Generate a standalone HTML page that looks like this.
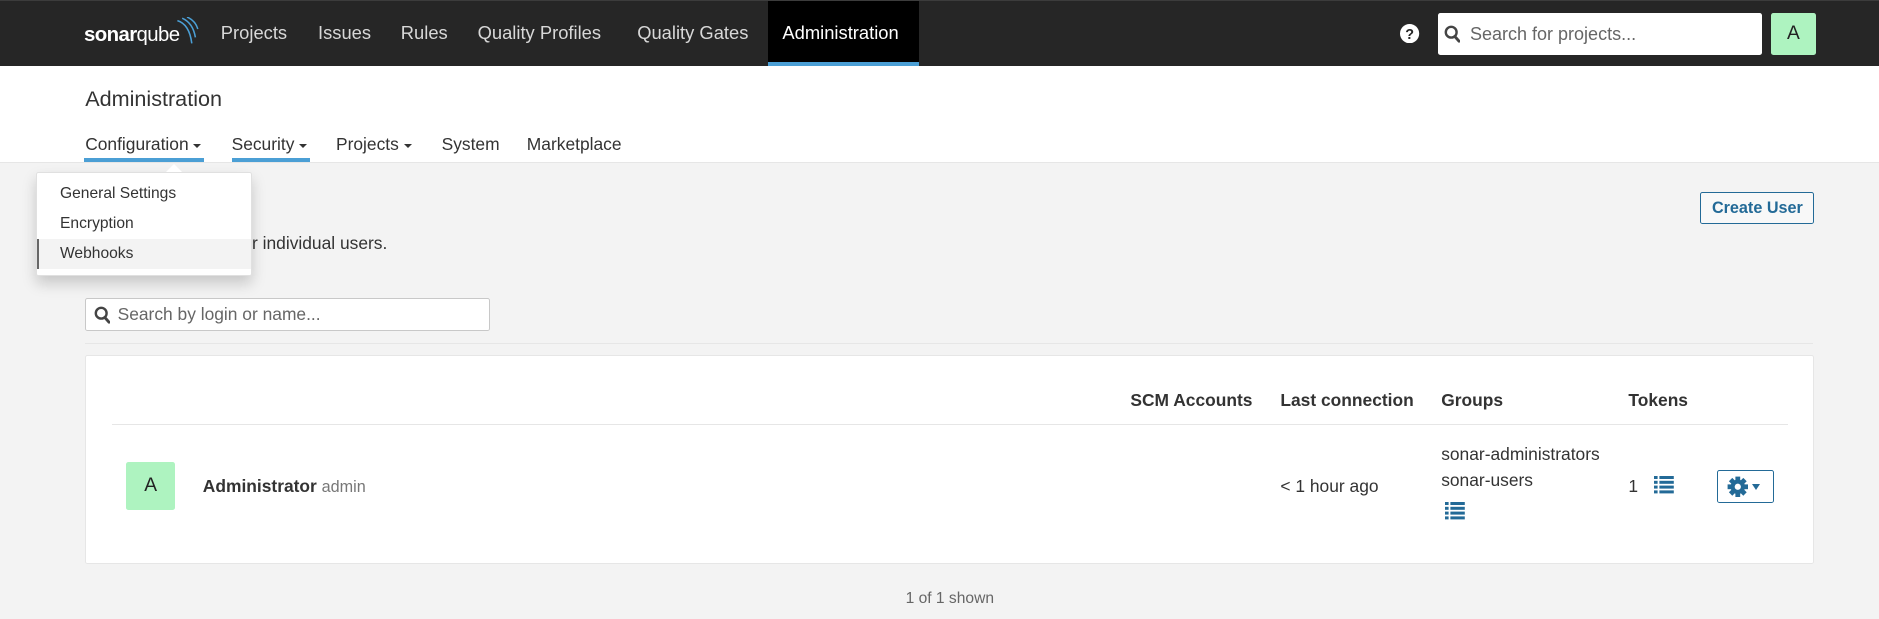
<!DOCTYPE html>
<html><head><meta charset="utf-8">
<style>
html{zoom:1.2}
*{box-sizing:border-box;margin:0;padding:0}
body{width:1566px;height:516px;overflow:hidden;background:#f3f3f3;font-family:"Liberation Sans",Arial,sans-serif;color:#333;position:relative;font-size:13px}
.abs{position:absolute}
.nav{left:0;top:0;width:1566px;height:55px;background:#262626;border-top:1px solid #3c3c3c}
.ni{position:absolute;top:0;height:55px;line-height:54px;font-size:15.3px;color:#d8d8d8;white-space:nowrap}
.hdr{left:0;top:55px;width:1566px;height:81px;background:#fff;border-bottom:1px solid #e6e6e6}
.sub{position:absolute;top:112px;font-size:14.5px;color:#333;white-space:nowrap}
.car{display:inline-block;width:0;height:0;border-left:4px solid transparent;border-right:4px solid transparent;border-top:4px solid #333;vertical-align:middle;margin-left:4px}
.ul{position:absolute;height:3px;background:#4b9fd5;top:132px}
.th{position:absolute;top:325px;font-weight:bold;font-size:14.5px;color:#333;white-space:nowrap}
</style></head><body>
<div class="abs nav">
  <div class="abs" style="left:70px;top:13px;height:28px;width:100px;white-space:nowrap;color:#fff;font-size:17px;">
    <span style="position:absolute;top:6px;left:0;letter-spacing:-0.5px"><b>sonar</b>qube</span>
    <svg class="abs" style="left:76px;top:0" width="20" height="24" viewBox="0 0 20 24"><g fill="none" stroke="#4b9fd5" stroke-width="1.3"><path d="M2 3 Q12 6 14 22"/><path d="M6 1 Q15 5 17 17"/><path d="M10 0 Q17 3 19 10"/></g></svg>
  </div>
  <div class="ni" style="left:184px">Projects</div>
  <div class="ni" style="left:265px">Issues</div>
  <div class="ni" style="left:334px">Rules</div>
  <div class="ni" style="left:398px">Quality Profiles</div>
  <div class="ni" style="left:531px">Quality Gates</div>
  <div class="abs" style="left:640px;top:0;width:126px;height:54px;background:#000;border-bottom:4px solid #4b9fd5"></div>
  <div class="ni" style="left:652px;color:#fff">Administration</div>
  <svg class="abs" style="left:1167px;top:19px" width="16" height="16" viewBox="0 0 16 16"><circle cx="8" cy="8" r="8" fill="#fff"/><text x="8" y="12.5" text-anchor="middle" font-family="Liberation Sans" font-weight="bold" font-size="12" fill="#262626">?</text></svg>
  <div class="abs" style="left:1198px;top:10px;width:270px;height:35px;background:#fff;border-radius:2px"></div>
  <svg class="abs" style="left:1203px;top:20px" width="14" height="15" viewBox="0 0 14 15"><circle cx="6" cy="6" r="4.5" fill="none" stroke="#444" stroke-width="2"/><path d="M9 9.5l3.5 4" stroke="#444" stroke-width="2.4" stroke-linecap="round"/></svg>
  <div class="abs" style="left:1225px;top:10px;line-height:35px;font-size:15px;color:#666">Search for projects...</div>
  <div class="abs" style="left:1476px;top:10px;width:37px;height:35px;background:#aef3c0;border-radius:2px;text-align:center;line-height:35px;font-size:16px;color:#222">A</div>
</div>
<div class="abs hdr"></div>
<div class="abs" style="left:71px;top:72px;font-size:18px;color:#333">Administration</div>
<div class="sub" style="left:71px">Configuration<span class="car"></span></div>
<div class="sub" style="left:193px">Security<span class="car"></span></div>
<div class="sub" style="left:280px">Projects<span class="car"></span></div>
<div class="sub" style="left:368px">System</div>
<div class="sub" style="left:439px">Marketplace</div>
<div class="ul" style="left:70px;width:100px"></div>
<div class="ul" style="left:193px;width:65px"></div>

<div class="abs" style="left:210px;top:194px;font-size:14.5px;color:#333">r individual users.</div>
<div class="abs" style="left:1417px;top:160px;width:95px;height:27px;border:1px solid #236a97;border-radius:2px;background:#f8f8f8;color:#236a97;font-weight:bold;font-size:13.5px;text-align:center;line-height:25px">Create User</div>

<div class="abs" style="left:71px;top:248px;width:337px;height:28px;background:#fff;border:1px solid #c8c8c8;border-radius:2px"></div>
<svg class="abs" style="left:78px;top:255px" width="14" height="15" viewBox="0 0 14 15"><circle cx="6" cy="6" r="4.5" fill="none" stroke="#444" stroke-width="2"/><path d="M9 9.5l3.5 4" stroke="#444" stroke-width="2.4" stroke-linecap="round"/></svg>
<div class="abs" style="left:98px;top:253px;font-size:14.5px;color:#666">Search by login or name...</div>
<div class="abs" style="left:71px;top:286px;width:1440px;height:1px;background:#e6e6e6"></div>

<div class="abs" style="left:71px;top:296px;width:1441px;height:174px;background:#fff;border:1px solid #e6e6e6;border-radius:2px"></div>
<div class="th" style="left:942px">SCM Accounts</div>
<div class="th" style="left:1067px">Last connection</div>
<div class="th" style="left:1201px">Groups</div>
<div class="th" style="left:1357px">Tokens</div>
<div class="abs" style="left:93px;top:353px;width:1397px;height:1px;background:#e6e6e6"></div>
<div class="abs" style="left:105px;top:385px;width:41px;height:40px;background:#aef3c0;border-radius:2px;text-align:center;line-height:40px;font-size:16px;color:#222">A</div>
<div class="abs" style="left:169px;top:397px;font-size:14.5px;white-space:nowrap"><b>Administrator</b> <span style="color:#777;font-size:13.5px">admin</span></div>
<div class="abs" style="left:1067px;top:397px;font-size:14.5px">&lt; 1 hour ago</div>
<div class="abs" style="left:1201px;top:370px;font-size:14.5px">sonar-administrators</div>
<div class="abs" style="left:1201px;top:392px;font-size:14.5px">sonar-users</div>
<svg class="abs" style="left:1204px;top:418px" width="17" height="15" viewBox="0 0 17 15"><g fill="#236a97"><rect x="0" y="0" width="3" height="2.5"/><rect x="4.5" y="0" width="12" height="2.5"/><rect x="0" y="4" width="3" height="2.5"/><rect x="4.5" y="4" width="12" height="2.5"/><rect x="0" y="8" width="3" height="2.5"/><rect x="4.5" y="8" width="12" height="2.5"/><rect x="0" y="12" width="3" height="2.5"/><rect x="4.5" y="12" width="12" height="2.5"/></g></svg>
<div class="abs" style="left:1357px;top:397px;font-size:14.5px">1</div>
<svg class="abs" style="left:1378px;top:397px" width="17" height="15" viewBox="0 0 17 15"><g fill="#236a97"><rect x="0" y="0" width="3" height="2.5"/><rect x="4.5" y="0" width="12" height="2.5"/><rect x="0" y="4" width="3" height="2.5"/><rect x="4.5" y="4" width="12" height="2.5"/><rect x="0" y="8" width="3" height="2.5"/><rect x="4.5" y="8" width="12" height="2.5"/><rect x="0" y="12" width="3" height="2.5"/><rect x="4.5" y="12" width="12" height="2.5"/></g></svg>
<div class="abs" style="left:1431px;top:392px;width:47px;height:27px;border:1px solid #236a97;border-radius:2px;background:#fff"></div>
<svg class="abs" style="left:1439px;top:397px" width="18" height="18" viewBox="0 0 18 18"><g fill="#236a97"><circle cx="9" cy="9" r="6"/><rect x="7" y="0.5" width="4" height="17"/><rect x="0.5" y="7" width="17" height="4"/><rect x="7" y="0.5" width="4" height="17" transform="rotate(45 9 9)"/><rect x="7" y="0.5" width="4" height="17" transform="rotate(-45 9 9)"/></g><circle cx="9" cy="9" r="2.6" fill="#fff"/></svg>
<div class="abs" style="left:1460px;top:403px;width:0;height:0;border-left:4px solid transparent;border-right:4px solid transparent;border-top:5px solid #236a97"></div>

<div class="abs" style="left:0;top:492px;width:1583px;text-align:center;font-size:13px;color:#666">1 of 1 shown</div>

<div class="abs" style="left:30px;top:143px;width:180px;height:87px;background:#fff;box-shadow:0 6px 12px rgba(0,0,0,.18);border:1px solid #e0e0e0;border-radius:2px"></div>
<div class="abs" style="left:138px;top:137px;width:0;height:0;border-left:7px solid transparent;border-right:7px solid transparent;border-bottom:7px solid #fff"></div>
<div class="abs" style="left:50px;top:154px;font-size:13px;color:#333">General Settings</div>
<div class="abs" style="left:50px;top:179px;font-size:13px;color:#333">Encryption</div>
<div class="abs" style="left:31px;top:199px;width:178px;height:25px;background:#f3f3f3;border-left:2px solid #666"></div>
<div class="abs" style="left:50px;top:204px;font-size:13px;color:#333">Webhooks</div>
</body></html>
